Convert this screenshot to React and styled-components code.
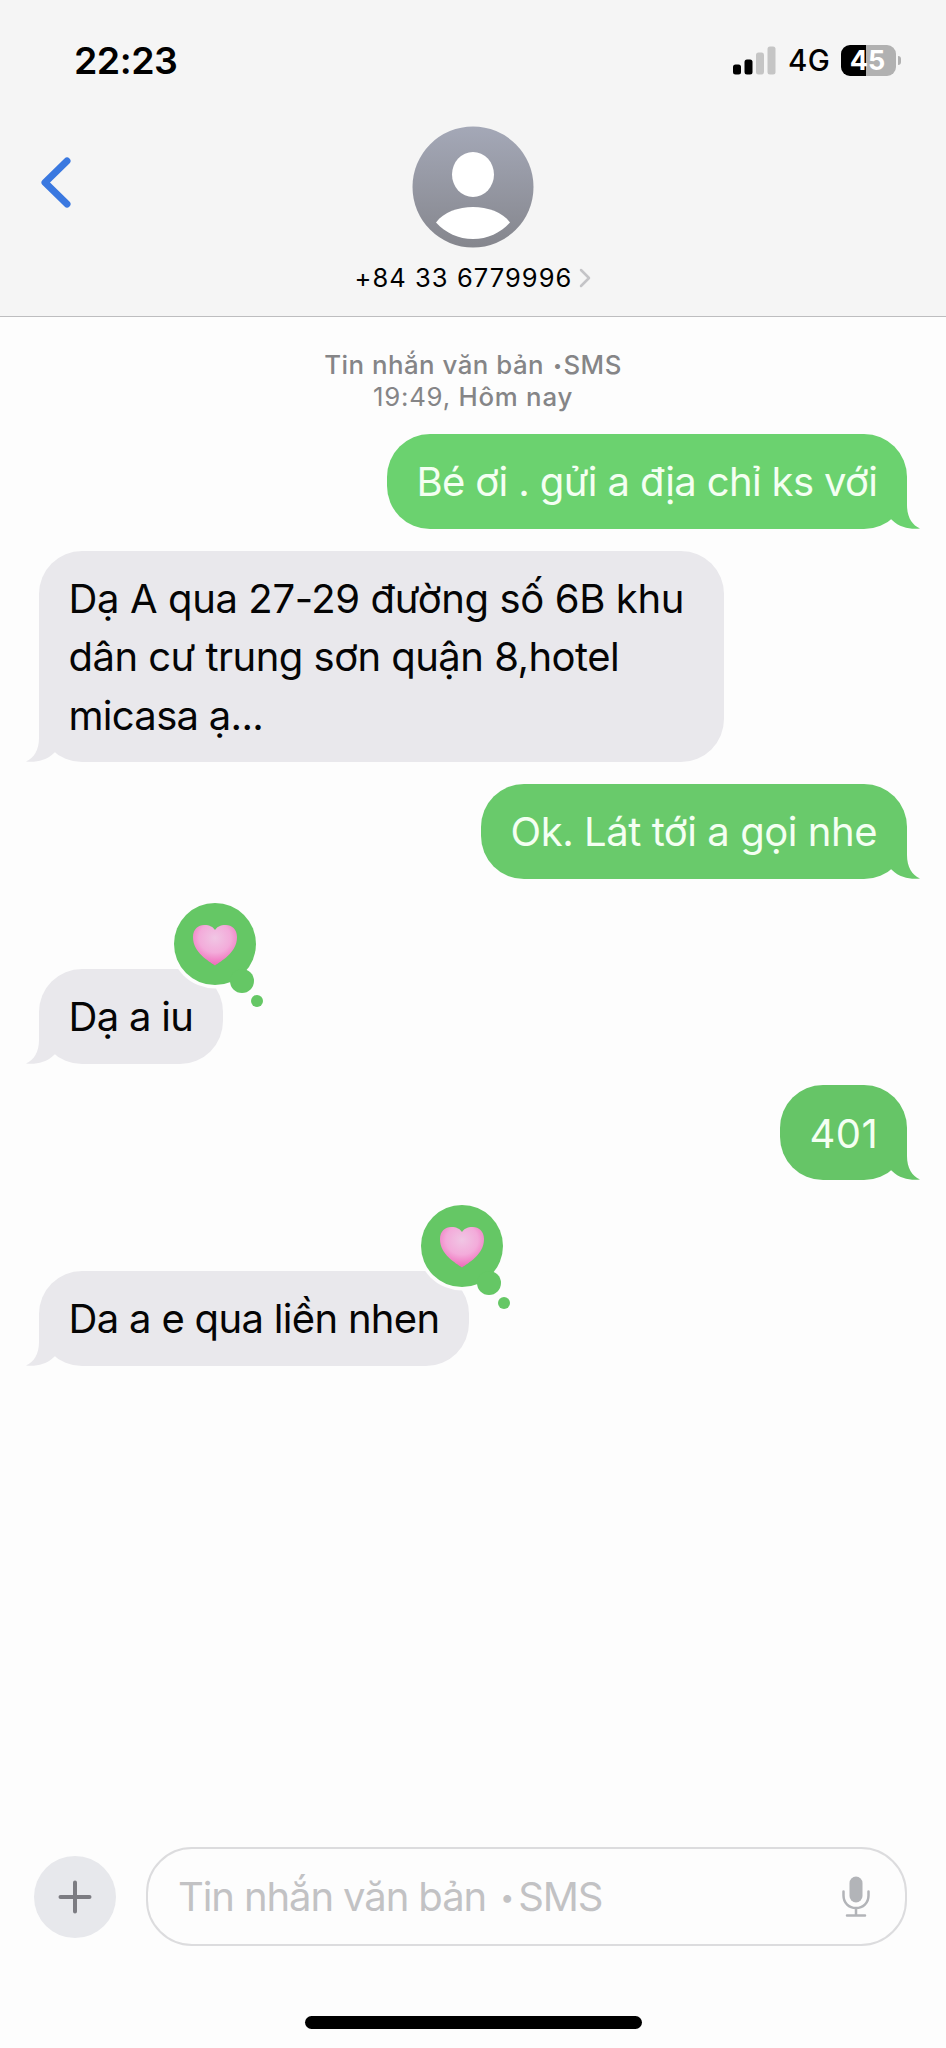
import React from 'react';
import styled, { createGlobalStyle, css } from 'styled-components';

const Global = createGlobalStyle`
  * { box-sizing: border-box; }
  body { margin: 0; background: #fdfdfd; font-family: Inter, "Liberation Sans", sans-serif; color: #000; }
`;

const Screen = styled.main`
  width: 946px;
  height: 2048px;
  display: flex;
  flex-direction: column;
  overflow: hidden;
`;

const Header = styled.header`
  height: 317px;
  flex: none;
  background: #f5f5f5;
  border-bottom: 1.5px solid #bdbdbf;
`;

const StatusBar = styled.div`
  height: 126px;
  padding: 37px 45px 0 74px;
  display: flex;
  align-items: flex-start;
  justify-content: space-between;
`;

const Clock = styled.div`
  font-size: 37.5px;
  font-weight: 600;
  line-height: 47px;
  letter-spacing: ${(p) => p.$track}px;
`;

const StatusIcons = styled.div`
  display: flex;
  height: 46px;
  align-items: center;
`;

const Network = styled.span`
  width: 53px;
  padding-left: 12px;
  font-size: 29.5px;
  font-weight: 500;
  line-height: 48px;
  letter-spacing: ${(p) => p.$track}px;
  white-space: nowrap;
`;

const Battery = styled.div`
  width: 55px;
  height: 31px;
  margin-left: 12px;
  padding-right: 2px;
  border-radius: 9px;
  background: linear-gradient(90deg, #000 46%, #b1b1b1 46%);
  color: #fff;
  font-size: 27px;
  font-weight: 700;
  line-height: 31px;
  text-align: center;
`;

const BatteryTip = styled.div`
  width: 3px;
  height: 9px;
  margin-left: 2px;
  border-radius: 0 4px 4px 0;
  background: #b1b1b1;
`;

const ContactBar = styled.div`
  display: grid;
  grid-template-columns: 200px 1fr 200px;
`;

const BackButton = styled.button`
  width: 50px;
  height: 60px;
  margin: 27px 0 0 35px;
  padding: 0;
  border: 0;
  background: none;
`;

const Contact = styled.div`
  display: flex;
  flex-direction: column;
  align-items: center;
`;

const ContactName = styled.div`
  display: flex;
  align-items: center;
  gap: 7px;
  margin-top: 13px;
  font-size: 25.5px;
  line-height: 34px;
  letter-spacing: ${(p) => p.$track}px;
  white-space: nowrap;
`;

const Thread = styled.section`
  flex: 1;
  display: flex;
  flex-direction: column;
  padding: 32px 39px 0;
`;

const Stamp = styled.div`
  height: 85px;
  color: #858587;
  text-align: center;
  font-size: 25.8px;
  line-height: 32px;
  white-space: nowrap;
`;

const StampLine = styled.div`
  font-weight: 500;
  letter-spacing: ${(p) => p.$track}px;
`;

const Thin = styled.span`
  font-weight: 400;
`;

const Dot = styled.span`
  display: inline-block;
  width: ${(p) => p.$width}px;
  font-size: 0.62em;
  line-height: 1;
  text-align: center;
  vertical-align: 0.2em;
  letter-spacing: 0;
`;

const Bubble = styled.div`
  position: relative;
  width: ${(p) => p.$width}px;
  margin-top: ${(p) => p.$gap}px;
  padding: 19.4px 0 17px 29.5px;
  border-radius: 43px;
  font-size: 40px;
  line-height: 58.3px;
  white-space: nowrap;
  ${(p) =>
    p.$sent
      ? css`
          align-self: flex-end;
          background: ${p.$fill};
          color: #f4fff2;
        `
      : css`
          align-self: flex-start;
          background: #e9e8ec;
          color: #050505;
        `}
`;

const Line = styled.div`
  letter-spacing: ${(p) => p.$track}px;
`;

const Tail = styled.svg`
  position: absolute;
  bottom: 0;
  width: 34px;
  height: 44px;
  ${(p) => (p.$sent ? 'right: -14px;' : 'left: -14px; transform: scaleX(-1);')}
`;

const Reaction = styled.svg`
  position: absolute;
  top: -70px;
  right: ${(p) => p.$right}px;
  width: 104px;
  height: 114px;
`;

const Composer = styled.footer`
  height: 99px;
  flex: none;
  display: flex;
  align-items: center;
  padding: 0 39px 0 34px;
  gap: 30px;
`;

const AddButton = styled.button`
  width: 82px;
  height: 82px;
  padding: 0;
  border: 0;
  border-radius: 50%;
  background: #e7e8ec;
`;

const Field = styled.div`
  flex: 1;
  height: 99px;
  display: flex;
  align-items: center;
  justify-content: space-between;
  padding: 0 35px 0 30px;
  border: 2px solid #dcdcde;
  border-radius: 46px;
  color: #c2c2c4;
  font-size: 40px;
  white-space: nowrap;
`;

const HomeArea = styled.div`
  height: 102px;
  flex: none;
  padding-top: 70px;
`;

const HomeIndicator = styled.div`
  width: 337px;
  height: 12.5px;
  margin: 0 auto;
  border-radius: 7px;
  background: #000;
`;

const Heart = ({ id, right }) => (
  <Reaction viewBox="0 0 104 114" $right={right}>
    <defs>
      <radialGradient id={id} cx="50%" cy="32%" r="66%">
        <stop offset="0" stopColor="#f0c6e4" />
        <stop offset="0.55" stopColor="#f3abda" />
        <stop offset="1" stopColor="#f06cbb" />
      </radialGradient>
    </defs>
    <circle cx="45" cy="45" r="44.5" fill="#fdfdfd" />
    <circle cx="45" cy="45" r="41" fill="#65c765" />
    <circle cx="72" cy="82" r="12" fill="#65c765" />
    <circle cx="87" cy="102" r="6" fill="#65c765" />
    <path d="M45 66.5 C39 62 23 54 23 38 C23 30 28.5 26 34 26 C40 26 43 28 45 31 C47 28 50 26 56 26 C61.5 26 67 30 67 38 C67 54 51 62 45 66.5 Z" fill={`url(#${id})`} />
  </Reaction>
);

const MESSAGES = [
  { sent: true, fill: '#6bd26f', width: 520, gap: 0, lines: [['Bé ơi . gửi a địa chỉ ks với', -0.63]] },
  {
    width: 685,
    gap: 22,
    lines: [
      ['Dạ A qua 27-29 đường số 6B khu', -0.38],
      ['dân cư trung sơn quận 8,hotel', -0.53],
      ['micasa ạ...', -0.7],
    ],
  },
  { sent: true, fill: '#69ca6b', width: 426, gap: 22, lines: [['Ok. Lát tới a gọi nhe', -0.45]] },
  { width: 184, gap: 90.3, heartRight: -51, lines: [['Dạ a iu', -0.7]] },
  { sent: true, fill: '#66c567', width: 127, gap: 21.8, lines: [['401', 0.5]] },
  { width: 430, gap: 90.8, heartRight: -52, lines: [['Da a e qua liền nhen', -0.68]] },
];

export default function App() {
  return (
    <>
      <Global />
      <Screen>
        <Header>
          <StatusBar>
            <Clock $track={-0.5}>22:23</Clock>
            <StatusIcons>
              <svg width="43" height="30" viewBox="0 0 43 30">
                <rect x="0" y="19.5" width="8" height="10" rx="2.5" />
                <rect x="11.5" y="14.5" width="8" height="15" rx="2.5" />
                <rect x="23" y="7.5" width="8" height="22" rx="2.5" fill="#c5c5c5" />
                <rect x="34.5" y="1.5" width="8" height="28" rx="2.5" fill="#c5c5c5" />
              </svg>
              <Network $track={0.3}>4G</Network>
              <Battery>45</Battery>
              <BatteryTip />
            </StatusIcons>
          </StatusBar>
          <ContactBar>
            <BackButton>
              <svg width="50" height="60" viewBox="0 0 50 60">
                <path d="M32 8 L10 29.5 L32 51" fill="none" stroke="#3a78e0" strokeWidth="7" strokeLinecap="round" strokeLinejoin="round" />
              </svg>
            </BackButton>
            <Contact>
              <svg width="122" height="122" viewBox="-0.5 0 122 122">
                <defs>
                  <linearGradient id="avatar" x1="0" y1="0" x2="0" y2="1">
                    <stop offset="0" stopColor="#a4a8b7" />
                    <stop offset="1" stopColor="#85868d" />
                  </linearGradient>
                </defs>
                <circle cx="60.5" cy="61" r="60.5" fill="url(#avatar)" />
                <ellipse cx="60.5" cy="48.5" rx="21" ry="22.5" fill="#fff" />
                <path d="M23.5 96.5 C31 86 46 81 60.5 81 C75 81 90 86 97.5 96.5 C88 107 75 113 60.5 113 C46 113 33 107 23.5 96.5 Z" fill="#fff" />
              </svg>
              <ContactName $track={1.05}>
                +84 33 6779996
                <svg width="12" height="20" viewBox="0 0 12 20">
                  <path d="M2 2 L10 10 L2 18" fill="none" stroke="#c4c4c7" strokeWidth="2.5" strokeLinecap="round" strokeLinejoin="round" />
                </svg>
              </ContactName>
            </Contact>
          </ContactBar>
        </Header>
        <Thread>
          <Stamp>
            <StampLine $track={0.5}>
              Tin nhắn văn bản <Dot $width={12}>•</Dot>SMS
            </StampLine>
            <StampLine $track={0.75}>
              <Thin>19:49,</Thin> Hôm nay
            </StampLine>
          </Stamp>
          {MESSAGES.map((m, i) => (
            <Bubble key={i} $sent={m.sent} $fill={m.fill} $width={m.width} $gap={m.gap}>
              {m.lines.map(([text, track]) => (
                <Line key={text} $track={track}>
                  {text}
                </Line>
              ))}
              <Tail $sent={m.sent} viewBox="-20 -44 34 44">
                <path d="M-20 -44 L0 -44 L0 -24 C0 -12 5 -4 13 -0.5 C4 0.5 -7 -1 -15 -9 L-20 -14 Z" fill={m.sent ? m.fill : '#e9e8ec'} />
              </Tail>
              {m.heartRight && <Heart id={`heart${i}`} right={m.heartRight} />}
            </Bubble>
          ))}
        </Thread>
        <Composer>
          <AddButton>
            <svg width="82" height="82" viewBox="0 0 82 82">
              <path d="M41 26.5 V55.5 M26.5 41 H55.5" stroke="#7c7c82" strokeWidth="4" strokeLinecap="round" />
            </svg>
          </AddButton>
          <Field>
            <Line $track={-1.1}>
              Tin nhắn văn bản <Dot $width={22}>•</Dot>SMS
            </Line>
            <svg width="28" height="42" viewBox="0 0 28 42">
              <rect x="7.5" y="0.5" width="13" height="26" rx="6.5" fill="#b2b4b8" />
              <path d="M1.5 15.5 V19.5 C1.5 27 7 32 14 32 C21 32 26.5 27 26.5 19.5 V15.5 M14 32 V39 M5 39.5 H23" fill="none" stroke="#b2b4b8" strokeWidth="2.5" strokeLinecap="round" />
            </svg>
          </Field>
        </Composer>
        <HomeArea>
          <HomeIndicator />
        </HomeArea>
      </Screen>
    </>
  );
}
